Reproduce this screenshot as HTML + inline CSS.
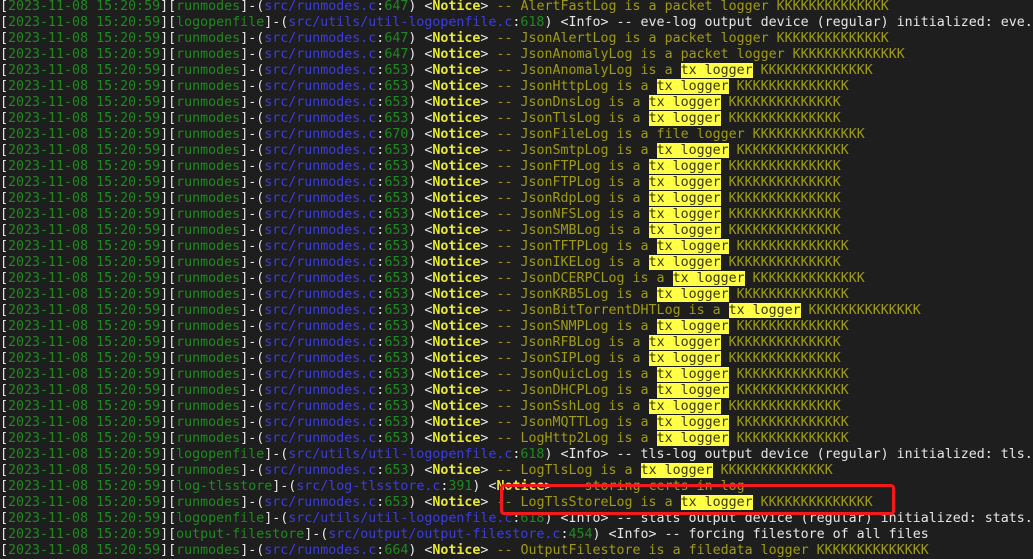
<!DOCTYPE html>
<html><head><meta charset="utf-8"><style>
html,body{margin:0;padding:0;background:#1e1e1e;width:1033px;height:556px;overflow:hidden}
#t{position:absolute;left:0;top:-1px;font-family:"DejaVu Sans Mono","Liberation Mono",monospace;font-size:13.3px;line-height:16px;white-space:pre;color:#e6e6e6}
.g{color:#1f8a1f}.b{color:#3c3ce0}.y{color:#e8e83c;font-weight:bold}.o{color:#a09a18}
.h{background:#ffff45;color:#3a3a00}
#box{position:absolute;left:500px;top:484px;width:389px;height:25px;border:3px solid #f21a1a;border-radius:4px}
</style></head><body>
<div id="t"></div>
<div id="box"></div>
<script>
var L=[
["runmodes","src/runmodes.c","647","Notice","AlertFastLog is a packet logger KKKKKKKKKKKKKK"],
["logopenfile","src/utils/util-logopenfile.c","618","Info","eve-log output device (regular) initialized: eve.json"],
["runmodes","src/runmodes.c","647","Notice","JsonAlertLog is a packet logger KKKKKKKKKKKKKK"],
["runmodes","src/runmodes.c","647","Notice","JsonAnomalyLog is a packet logger KKKKKKKKKKKKKK"],
["runmodes","src/runmodes.c","653","Notice","JsonAnomalyLog is a |tx logger| KKKKKKKKKKKKKK"],
["runmodes","src/runmodes.c","653","Notice","JsonHttpLog is a |tx logger| KKKKKKKKKKKKKK"],
["runmodes","src/runmodes.c","653","Notice","JsonDnsLog is a |tx logger| KKKKKKKKKKKKKK"],
["runmodes","src/runmodes.c","653","Notice","JsonTlsLog is a |tx logger| KKKKKKKKKKKKKK"],
["runmodes","src/runmodes.c","670","Notice","JsonFileLog is a file logger KKKKKKKKKKKKKK"],
["runmodes","src/runmodes.c","653","Notice","JsonSmtpLog is a |tx logger| KKKKKKKKKKKKKK"],
["runmodes","src/runmodes.c","653","Notice","JsonFTPLog is a |tx logger| KKKKKKKKKKKKKK"],
["runmodes","src/runmodes.c","653","Notice","JsonFTPLog is a |tx logger| KKKKKKKKKKKKKK"],
["runmodes","src/runmodes.c","653","Notice","JsonRdpLog is a |tx logger| KKKKKKKKKKKKKK"],
["runmodes","src/runmodes.c","653","Notice","JsonNFSLog is a |tx logger| KKKKKKKKKKKKKK"],
["runmodes","src/runmodes.c","653","Notice","JsonSMBLog is a |tx logger| KKKKKKKKKKKKKK"],
["runmodes","src/runmodes.c","653","Notice","JsonTFTPLog is a |tx logger| KKKKKKKKKKKKKK"],
["runmodes","src/runmodes.c","653","Notice","JsonIKELog is a |tx logger| KKKKKKKKKKKKKK"],
["runmodes","src/runmodes.c","653","Notice","JsonDCERPCLog is a |tx logger| KKKKKKKKKKKKKK"],
["runmodes","src/runmodes.c","653","Notice","JsonKRB5Log is a |tx logger| KKKKKKKKKKKKKK"],
["runmodes","src/runmodes.c","653","Notice","JsonBitTorrentDHTLog is a |tx logger| KKKKKKKKKKKKKK"],
["runmodes","src/runmodes.c","653","Notice","JsonSNMPLog is a |tx logger| KKKKKKKKKKKKKK"],
["runmodes","src/runmodes.c","653","Notice","JsonRFBLog is a |tx logger| KKKKKKKKKKKKKK"],
["runmodes","src/runmodes.c","653","Notice","JsonSIPLog is a |tx logger| KKKKKKKKKKKKKK"],
["runmodes","src/runmodes.c","653","Notice","JsonQuicLog is a |tx logger| KKKKKKKKKKKKKK"],
["runmodes","src/runmodes.c","653","Notice","JsonDHCPLog is a |tx logger| KKKKKKKKKKKKKK"],
["runmodes","src/runmodes.c","653","Notice","JsonSshLog is a |tx logger| KKKKKKKKKKKKKK"],
["runmodes","src/runmodes.c","653","Notice","JsonMQTTLog is a |tx logger| KKKKKKKKKKKKKK"],
["runmodes","src/runmodes.c","653","Notice","LogHttp2Log is a |tx logger| KKKKKKKKKKKKKK"],
["logopenfile","src/utils/util-logopenfile.c","618","Info","tls-log output device (regular) initialized: tls.log"],
["runmodes","src/runmodes.c","653","Notice","LogTlsLog is a |tx logger| KKKKKKKKKKKKKK"],
["log-tlsstore","src/log-tlsstore.c","391","Notice","storing certs in log"],
["runmodes","src/runmodes.c","653","Notice","LogTlsStoreLog is a |tx logger| KKKKKKKKKKKKKK"],
["logopenfile","src/utils/util-logopenfile.c","618","Info","stats output device (regular) initialized: stats.log"],
["output-filestore","src/output/output-filestore.c","454","Info","forcing filestore of all files"],
["runmodes","src/runmodes.c","664","Notice","OutputFilestore is a filedata logger KKKKKKKKKKKKKK"]
];
var h="";
L.forEach(function(r){
 var msg=r[4],lvl;
 if(r[3]=="Info"){lvl='&lt;Info&gt; -- '+msg;}
 else{
  var p=msg.split("|");
  var m='<span class="o">'+p[0]+'</span>'+(p.length>1?'<span class="h">'+p[1]+'</span><span class="o">'+p[2]+'</span>':'');
  lvl='&lt;<span class="y">Notice</span>&gt; <span class="o">-- </span>'+m;
 }
 h+='[<span class="g">2023-11-08 15:20:59</span>][<span class="g">'+r[0]+'</span>]-(<span class="b">'+r[1]+'</span>:<span class="g">'+r[2]+'</span>) '+lvl+'\n';
});
document.getElementById("t").innerHTML=h;
</script>
</body></html>
